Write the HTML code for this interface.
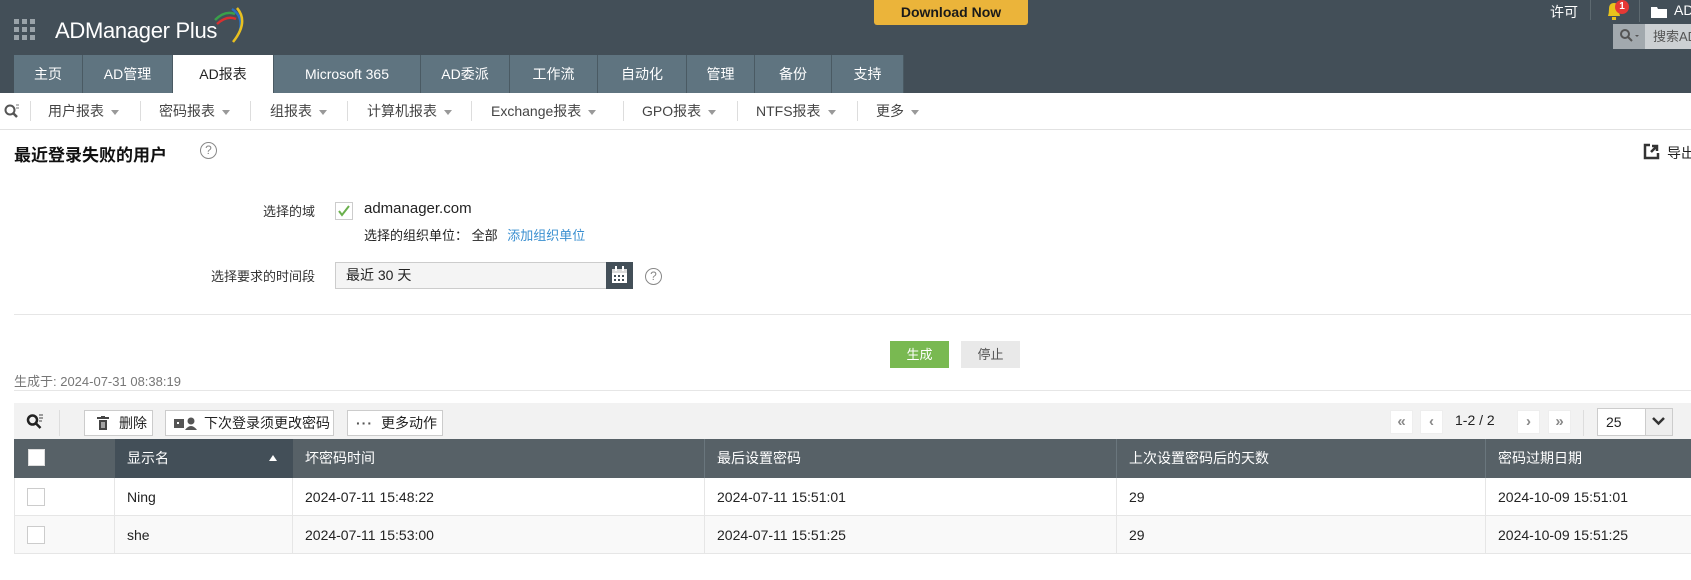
<!DOCTYPE html>
<html><head><meta charset="utf-8"><style>
*{box-sizing:border-box;margin:0;padding:0}
body{width:1691px;height:580px;overflow:hidden;background:#fff;font-family:"Liberation Sans","Noto Sans CJK SC",sans-serif;font-size:14px;color:#222;position:relative}
.a{position:absolute;white-space:nowrap}
#hd{left:0;top:0;width:1691px;height:93px;background:#434f58}
.tab{position:absolute;top:55px;height:38px;line-height:38px;text-align:center;color:#fff;background:#5f7480;border-right:1px solid #4a5a63;font-size:14px}
.tab.on{background:#fff;color:#222}
.sn{position:absolute;top:93px;height:36px;line-height:36px;color:#444;font-size:14px;white-space:nowrap}
.sep{position:absolute;top:101px;width:1px;height:20px;background:#ddd}
.tri{display:inline-block;border-left:4px solid transparent;border-right:4px solid transparent;border-top:5px solid #999;margin-left:7px;vertical-align:middle}
.th{position:absolute;top:439px;height:39px;line-height:39px;color:#fff;font-size:14px;padding-left:12px;border-right:1px solid #6a767d}
.td{position:absolute;height:38px;line-height:38px;font-size:14px;padding-left:12px;border-right:1px solid #e6e6e6;border-bottom:1px solid #e6e6e6}
.btn{position:absolute;top:410px;height:26px;border:1px solid #ccc;background:#fff;line-height:24px;font-size:14px;padding-left:8px;white-space:nowrap}
.pg{position:absolute;top:410px;width:23px;height:24px;background:#fff;border:1px solid #eee;color:#888;text-align:center;line-height:22px;font-size:15px;font-weight:bold}
.help{position:absolute;width:17px;height:17px;border:1.5px solid #888;border-radius:50%;color:#888;font-size:12px;text-align:center;line-height:14px}
</style></head><body>
<div id="hd" class="a"></div>
<svg class="a" style="left:14px;top:19px" width="22" height="22"><g fill="#9aa3a9"><rect x="0" y="0" width="5" height="5"/><rect x="8" y="0" width="5" height="5"/><rect x="16" y="0" width="5" height="5"/><rect x="0" y="8" width="5" height="5"/><rect x="8" y="8" width="5" height="5"/><rect x="16" y="8" width="5" height="5"/><rect x="0" y="16" width="5" height="5"/><rect x="8" y="16" width="5" height="5"/><rect x="16" y="16" width="5" height="5"/></g></svg>
<div class="a" style="left:55px;top:18px;color:#fff;font-size:22px;letter-spacing:-0.3px">ADManager Plus</div>
<svg class="a" style="left:205px;top:4px" width="42" height="42"><path d="M10 16 Q20 6 30 10" stroke="#3aa04a" stroke-width="2.5" fill="none"/><path d="M12 20 Q22 11 31 15" stroke="#d83030" stroke-width="2.5" fill="none"/><path d="M27 5 Q38 12 35 26" stroke="#2a6fc0" stroke-width="2.5" fill="none"/><path d="M32 4 Q44 18 28 38" stroke="#e8c020" stroke-width="2.5" fill="none"/></svg>
<div class="a" style="left:874px;top:0;width:154px;height:25px;background:#ebb43a;border-radius:0 0 3px 3px;text-align:center;line-height:25px;font-weight:bold;font-size:14px;color:#1a1a1a">Download Now</div>
<div class="a" style="left:1550px;top:2px;color:#fff;font-size:14px">许可</div>
<div class="a" style="left:1590px;top:0;width:1px;height:20px;background:#5d6970"></div>
<svg class="a" style="left:1605px;top:1px" width="18" height="20"><path d="M3 15 Q4 12 4 8 Q4 2 9 2 Q14 2 14 8 Q14 12 15 15Z" fill="#e8c21c"/><rect x="7" y="16" width="4" height="3" fill="#e8c21c"/></svg>
<div class="a" style="left:1615px;top:0;width:14px;height:14px;border-radius:50%;background:#e53935;color:#fff;font-size:10px;font-weight:bold;text-align:center;line-height:14px">1</div>
<div class="a" style="left:1639px;top:0;width:1px;height:22px;background:#5d6970"></div>
<svg class="a" style="left:1651px;top:6px" width="16" height="12"><path d="M0 1h6l1 2h9v9H0z" fill="#fff"/></svg>
<div class="a" style="left:1674px;top:2px;color:#fff">AD</div>
<div class="a" style="left:1613px;top:24px;width:32px;height:25px;background:#a2a9ae"></div>
<svg class="a" style="left:1620px;top:29px" width="22" height="14"><circle cx="5" cy="5" r="4" stroke="#555" stroke-width="2" fill="none"/><path d="M8 8l4 4" stroke="#555" stroke-width="2"/><path d="M15 6l2 2 2-2z" fill="#555"/></svg>
<div class="a" style="left:1645px;top:24px;width:46px;height:25px;background:#ccd0d3;color:#555;line-height:25px;padding-left:8px;font-size:13px;overflow:hidden">搜索AD</div>
<div class="tab" style="left:14px;width:69px">主页</div>
<div class="tab" style="left:83px;width:90px">AD管理</div>
<div class="tab on" style="left:173px;width:101px">AD报表</div>
<div class="tab" style="left:274px;width:147px">Microsoft 365</div>
<div class="tab" style="left:421px;width:89px">AD委派</div>
<div class="tab" style="left:510px;width:88px">工作流</div>
<div class="tab" style="left:598px;width:89px">自动化</div>
<div class="tab" style="left:687px;width:68px">管理</div>
<div class="tab" style="left:755px;width:77px">备份</div>
<div class="tab" style="left:832px;width:72px">支持</div>
<svg class="a" style="left:4px;top:103px" width="16" height="16"><circle cx="6" cy="7" r="4.5" stroke="#555" stroke-width="2" fill="none"/><path d="M9 10l4 4" stroke="#555" stroke-width="2.5"/><path d="M12 2h3M12 5h3" stroke="#777"/></svg>
<div class="sep" style="left:30px"></div><div class="sn" style="left:48px">用户报表<span class="tri"></span></div>
<div class="sep" style="left:140px"></div><div class="sn" style="left:159px">密码报表<span class="tri"></span></div>
<div class="sep" style="left:250px"></div><div class="sn" style="left:270px">组报表<span class="tri"></span></div>
<div class="sep" style="left:347px"></div><div class="sn" style="left:367px">计算机报表<span class="tri"></span></div>
<div class="sep" style="left:471px"></div><div class="sn" style="left:491px">Exchange报表<span class="tri"></span></div>
<div class="sep" style="left:623px"></div><div class="sn" style="left:642px">GPO报表<span class="tri"></span></div>
<div class="sep" style="left:737px"></div><div class="sn" style="left:756px">NTFS报表<span class="tri"></span></div>
<div class="sep" style="left:857px"></div><div class="sn" style="left:876px">更多<span class="tri"></span></div>
<div class="a" style="left:0;top:129px;width:1691px;height:1px;background:#e2e2e2"></div>
<div class="a" style="left:14px;top:141px;font-size:17px;font-weight:bold;color:#111">最近登录失败的用户</div>
<div class="help" style="left:200px;top:142px">?</div>
<svg class="a" style="left:1643px;top:143px" width="17" height="17"><path d="M7 2H2v13h13V10" stroke="#333" stroke-width="2.5" fill="none"/><path d="M8 9l6-6M9 3h5v5" stroke="#333" stroke-width="2.5" fill="none"/></svg>
<div class="a" style="left:1667px;top:143px;font-size:14px">导出</div>
<div class="a" style="left:200px;top:201px;font-size:13px;color:#333;width:115px;text-align:right">选择的域</div>
<div class="a" style="left:335px;top:202px;width:18px;height:18px;border:1px solid #ccc;background:#fff"></div>
<svg class="a" style="left:337px;top:204px" width="14" height="14"><path d="M2 7l3 4 7-9" stroke="#6ab04c" stroke-width="2" fill="none"/></svg>
<div class="a" style="left:364px;top:200px;font-size:15px">admanager.com</div>
<div class="a" style="left:364px;top:225px;font-size:13px">选择的组织单位： 全部 <span style="color:#3a8fd0;margin-left:6px">添加组织单位</span></div>
<div class="a" style="left:200px;top:266px;font-size:13px;color:#333;width:115px;text-align:right">选择要求的时间段</div>
<div class="a" style="left:335px;top:262px;width:272px;height:27px;border:1px solid #ccc;background:#f4f4f4;line-height:25px;padding-left:10px;font-size:14px">最近 30 天</div>
<div class="a" style="left:606px;top:262px;width:27px;height:27px;background:#434f58"></div>
<svg class="a" style="left:611px;top:266px" width="17" height="18"><rect x="1" y="3" width="15" height="14" fill="#fff"/><rect x="1" y="3" width="15" height="4" fill="#ddd"/><rect x="4" y="0" width="2" height="5" fill="#fff"/><rect x="11" y="0" width="2" height="5" fill="#fff"/><g fill="#434f58"><rect x="3" y="9" width="2" height="2"/><rect x="7" y="9" width="2" height="2"/><rect x="11" y="9" width="2" height="2"/><rect x="3" y="13" width="2" height="2"/><rect x="7" y="13" width="2" height="2"/><rect x="11" y="13" width="2" height="2"/></g></svg>
<div class="help" style="left:645px;top:268px">?</div>
<div class="a" style="left:14px;top:314px;width:1677px;height:1px;background:#e6e6e6"></div>
<div class="a" style="left:890px;top:341px;width:59px;height:27px;background:#79b951;color:#fff;text-align:center;line-height:27px;font-size:13px">生成</div>
<div class="a" style="left:961px;top:341px;width:59px;height:27px;background:#e9e9e9;color:#555;text-align:center;line-height:27px;font-size:13px">停止</div>
<div class="a" style="left:14px;top:371px;color:#777;font-size:13px">生成于: 2024-07-31 08:38:19</div>
<div class="a" style="left:14px;top:390px;width:1677px;height:1px;background:#e6e6e6"></div>
<div class="a" style="left:14px;top:403px;width:1677px;height:36px;background:#f2f2f2"></div>
<svg class="a" style="left:26px;top:413px" width="18" height="18"><circle cx="6.5" cy="7" r="4.5" stroke="#222" stroke-width="2.5" fill="none"/><path d="M9.5 10l5 5" stroke="#222" stroke-width="2.5"/><path d="M13 2h4M13 5h4M13 8h3" stroke="#444"/></svg>
<div class="a" style="left:59px;top:410px;width:1px;height:26px;background:#ddd"></div>
<div class="btn" style="left:84px;width:69px"><svg width="12" height="14" style="vertical-align:-2px;margin:0 10px 0 4px"><rect x="0" y="1" width="12" height="2" fill="#444"/><rect x="4" y="0" width="4" height="2" fill="#444"/><rect x="2" y="4" width="8" height="10" fill="#444"/><path d="M5 6v6M7 6v6" stroke="#fff"/></svg>删除</div>
<div class="btn" style="left:165px;width:169px"><svg width="24" height="14" style="vertical-align:-2px;margin-right:6px"><rect x="0" y="3" width="10" height="9" fill="#555"/><circle cx="17" cy="5" r="3.5" fill="#555"/><path d="M11 14 Q17 6 23 14z" fill="#555"/><rect x="3" y="6" width="2" height="2" fill="#fff"/></svg>下次登录须更改密码</div>
<div class="btn" style="left:347px;width:96px"><span style="color:#555;font-weight:bold;margin-right:8px;letter-spacing:1px">···</span>更多动作</div>
<div class="pg" style="left:1390px">«</div><div class="pg" style="left:1420px">‹</div>
<div class="a" style="left:1455px;top:412px;font-size:14px">1-2 / 2</div>
<div class="pg" style="left:1517px">›</div><div class="pg" style="left:1548px">»</div>
<div class="a" style="left:1583px;top:410px;width:1px;height:26px;background:#ddd"></div>
<div class="a" style="left:1597px;top:408px;width:76px;height:28px;border:1px solid #ccc;background:#fff;line-height:26px;padding-left:8px;font-size:14px">25</div>
<div class="a" style="left:1645px;top:409px;width:27px;height:26px;background:#eee;border-left:1px solid #ccc"></div>
<svg class="a" style="left:1652px;top:417px" width="13" height="9"><path d="M1 1l5.5 5.5L12 1" stroke="#333" stroke-width="2.5" fill="none"/></svg>
<div class="a" style="left:14px;top:439px;width:1677px;height:39px;background:#576167"></div>
<div class="a" style="left:115px;top:439px;width:178px;height:39px;background:#434f58"></div>
<div class="a" style="left:28px;top:449px;width:17px;height:17px;background:#fff;border:1px solid #ddd"></div>
<div class="th" style="left:115px;width:178px;border:none">显示名<span style="position:absolute;right:16px;top:16px;border-left:4px solid transparent;border-right:4px solid transparent;border-bottom:6px solid #fff"></span></div>
<div class="th" style="left:293px;width:412px">坏密码时间</div>
<div class="th" style="left:705px;width:412px">最后设置密码</div>
<div class="th" style="left:1117px;width:369px">上次设置密码后的天数</div>
<div class="th" style="left:1486px;width:205px;border:none">密码过期日期</div>
<div class="a" style="left:14px;top:478px;width:1677px;height:38px;background:#fff"></div>
<div class="a" style="left:14px;top:516px;width:1677px;height:38px;background:#f9f9f9"></div>
<div class="td" style="left:14px;top:478px;width:101px;border-left:1px solid #e6e6e6"></div>
<div class="a" style="left:27px;top:488px;width:18px;height:18px;border:1px solid #ccc;background:#fff"></div>
<div class="td" style="left:115px;top:478px;width:178px">Ning</div>
<div class="td" style="left:293px;top:478px;width:412px">2024-07-11 15:48:22</div>
<div class="td" style="left:705px;top:478px;width:412px">2024-07-11 15:51:01</div>
<div class="td" style="left:1117px;top:478px;width:369px">29</div>
<div class="td" style="left:1486px;top:478px;width:205px;border-right:none">2024-10-09 15:51:01</div>
<div class="td" style="left:14px;top:516px;width:101px;border-left:1px solid #e6e6e6"></div>
<div class="a" style="left:27px;top:526px;width:18px;height:18px;border:1px solid #ccc;background:#fff"></div>
<div class="td" style="left:115px;top:516px;width:178px">she</div>
<div class="td" style="left:293px;top:516px;width:412px">2024-07-11 15:53:00</div>
<div class="td" style="left:705px;top:516px;width:412px">2024-07-11 15:51:25</div>
<div class="td" style="left:1117px;top:516px;width:369px">29</div>
<div class="td" style="left:1486px;top:516px;width:205px;border-right:none">2024-10-09 15:51:25</div>
</body></html>
